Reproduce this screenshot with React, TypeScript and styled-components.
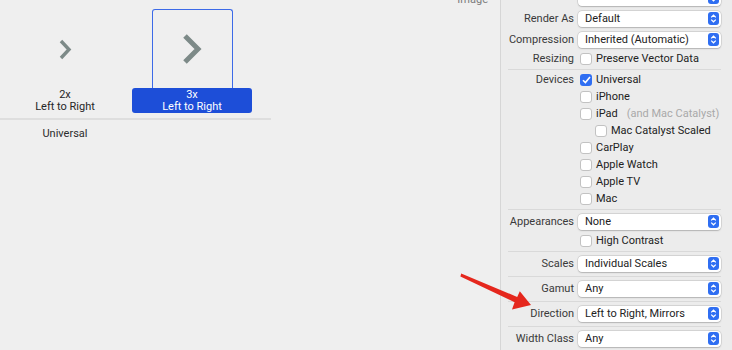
import React from "react";
import styled, { createGlobalStyle } from "styled-components";

const GlobalStyle = createGlobalStyle`
  html, body {
    margin: 0;
    padding: 0;
    background: #efefef;
  }
  body {
    font-family: Roboto, "Liberation Sans", sans-serif;
    font-size: 11px;
    color: #262626;
  }
`;

// Window

const Window = styled.div`
  position: relative;
  display: flex;
  width: 732px;
  height: 350px;
  overflow: hidden;
  background: #efefef;
`;

// Left side: the asset canvas with its slots

const Canvas = styled.div`
  flex: 1;
  display: flex;
  flex-direction: column;
`;

const CanvasHeader = styled.div`
  height: 0;
  overflow: visible;
  text-align: right;
  padding-right: 12px;
  color: #7d7d7d;
  line-height: 11px;
  transform: translateY(-6px);
`;

const SlotGroup = styled.div`
  width: 271px;
  display: flex;
  gap: 7px;
  padding: 9px 0 5px 5px;
  box-sizing: border-box;
  border-bottom: 2px solid #dedede;
`;

const Slot = styled.div`
  width: 120px;
  display: flex;
  flex-direction: column;
  align-items: center;
`;

const Well = styled.div<{ $selected?: boolean }>`
  width: 81px;
  height: 79px;
  box-sizing: border-box;
  display: flex;
  align-items: center;
  justify-content: center;
  border: 1px solid ${(p) => (p.$selected ? "#3c6ae8" : "transparent")};
  border-bottom: none;
  border-radius: 3px 3px 0 0;
`;

const Caption = styled.div<{ $selected?: boolean }>`
  width: 120px;
  height: 25px;
  box-sizing: border-box;
  padding-top: 1px;
  border-radius: 3px;
  text-align: center;
  line-height: 12px;
  background: ${(p) => (p.$selected ? "#1d4ed8" : "transparent")};
  color: ${(p) => (p.$selected ? "#ffffff" : "#262626")};
`;

const GroupFooter = styled.div`
  width: 120px;
  margin: 7px 0 0 5px;
  text-align: center;
  color: #2c2c2c;
`;

// Right side: inspector

const Inspector = styled.div`
  width: 231px;
  flex-shrink: 0;
  border-left: 1px solid #d6d6d6;
  background: #ececec;
  display: flex;
  flex-direction: column;
`;

const Section = styled.div<{ $first?: boolean }>`
  margin: ${(p) => (p.$first ? "-14px" : "0")} 11px 0 7px;
  padding: 1px 0 2px;
  border-bottom: 1px solid #d9d9d9;

  &:last-child {
    border-bottom: none;
  }
`;

const Row = styled.div<{ $kind: "popup" | "check" }>`
  display: grid;
  grid-template-columns: 66px 1fr;
  column-gap: 4px;
  align-items: center;
  height: ${(p) => (p.$kind === "popup" ? 21 : 17)}px;
`;

const Label = styled.div`
  text-align: right;
  color: #3a3a3a;
  white-space: nowrap;
`;

const Popup = styled.div`
  height: 16px;
  box-sizing: border-box;
  display: flex;
  align-items: center;
  justify-content: space-between;
  padding: 0 2px 0 7px;
  background: #ffffff;
  border-radius: 4px;
  box-shadow: 0 0 0 0.5px rgba(0, 0, 0, 0.14), 0 0.5px 1.5px rgba(0, 0, 0, 0.18);
  color: #222;
  white-space: nowrap;
`;

const Stepper = styled.span`
  width: 11px;
  height: 13px;
  border-radius: 3px;
  background: #2f6ef2;
  display: flex;
  align-items: center;
  justify-content: center;
`;

const CheckItem = styled.label<{ $indent?: number }>`
  display: flex;
  align-items: center;
  gap: 4px;
  padding-left: ${(p) => 2 + (p.$indent ?? 0)}px;
  white-space: nowrap;
  color: #222;
`;

const Box = styled.span<{ $checked?: boolean }>`
  width: 12px;
  height: 12px;
  box-sizing: border-box;
  border-radius: 3px;
  display: flex;
  align-items: center;
  justify-content: center;
  background: ${(p) => (p.$checked ? "#2f6ef2" : "#ffffff")};
  border: ${(p) => (p.$checked ? "none" : "1px solid #c2c2c2")};
`;

const Muted = styled.span`
  color: #a9a9a9;
  margin-left: 5px;
`;

const ArrowOverlay = styled.svg`
  position: absolute;
  left: 0;
  top: 0;
  pointer-events: none;
`;

// Drawings

const Chevron = ({ size }: { size: "small" | "large" }) =>
  size === "large" ? (
    <svg width="20" height="32" viewBox="0 0 20 32">
      <polyline points="3,3 16,16 3,29" fill="none" stroke="#7d8a88" strokeWidth="5" />
    </svg>
  ) : (
    <svg width="14" height="21" viewBox="0 0 14 21">
      <polyline points="3,2 11,10.5 3,19" fill="none" stroke="#7d8a88" strokeWidth="3.4" />
    </svg>
  );

const StepperIcon = () => (
  <Stepper>
    <svg width="7" height="9" viewBox="0 0 7 9">
      <polyline points="1.2,3.4 3.5,1.2 5.8,3.4" fill="none" stroke="#fff" strokeWidth="1.2" />
      <polyline points="1.2,5.6 3.5,7.8 5.8,5.6" fill="none" stroke="#fff" strokeWidth="1.2" />
    </svg>
  </Stepper>
);

const Check = ({ checked, indent, children }: { checked?: boolean; indent?: number; children: React.ReactNode }) => (
  <CheckItem $indent={indent}>
    <Box $checked={checked}>
      {checked && (
        <svg width="9" height="8" viewBox="0 0 9 8">
          <polyline points="1,4.2 3.4,6.6 8,1" fill="none" stroke="#fff" strokeWidth="1.6" />
        </svg>
      )}
    </Box>
    {children}
  </CheckItem>
);

const PopupRow = ({ label, value }: { label: string; value: string }) => (
  <Row $kind="popup">
    <Label>{label}</Label>
    <Popup>
      <span>{value}</span>
      <StepperIcon />
    </Popup>
  </Row>
);

const CheckRow = ({ label, ...rest }: { label?: string; checked?: boolean; indent?: number; children: React.ReactNode }) => (
  <Row $kind="check">
    <Label>{label}</Label>
    <Check {...rest} />
  </Row>
);

const App = () => {
  return (
    <Window>
      <GlobalStyle />
      <Canvas>
        <CanvasHeader>Image</CanvasHeader>
        <SlotGroup>
          <Slot>
            <Well>
              <Chevron size="small" />
            </Well>
            <Caption>
              2x
              <br />
              Left to Right
            </Caption>
          </Slot>
          <Slot>
            <Well $selected>
              <Chevron size="large" />
            </Well>
            <Caption $selected>
              3x
              <br />
              Left to Right
            </Caption>
          </Slot>
        </SlotGroup>
        <GroupFooter>Universal</GroupFooter>
      </Canvas>

      <Inspector>
        <Section $first>
          <PopupRow label="" value="" />
          <PopupRow label="Render As" value="Default" />
          <PopupRow label="Compression" value="Inherited (Automatic)" />
          <CheckRow label="Resizing">Preserve Vector Data</CheckRow>
        </Section>
        <Section>
          <CheckRow label="Devices" checked>
            Universal
          </CheckRow>
          <CheckRow>iPhone</CheckRow>
          <CheckRow>
            iPad<Muted>(and Mac Catalyst)</Muted>
          </CheckRow>
          <CheckRow indent={15}>Mac Catalyst Scaled</CheckRow>
          <CheckRow>CarPlay</CheckRow>
          <CheckRow>Apple Watch</CheckRow>
          <CheckRow>Apple TV</CheckRow>
          <CheckRow>Mac</CheckRow>
        </Section>
        <Section>
          <PopupRow label="Appearances" value="None" />
          <CheckRow>High Contrast</CheckRow>
        </Section>
        <Section>
          <PopupRow label="Scales" value="Individual Scales" />
        </Section>
        <Section>
          <PopupRow label="Gamut" value="Any" />
        </Section>
        <Section>
          <PopupRow label="Direction" value="Left to Right, Mirrors" />
        </Section>
        <Section>
          <PopupRow label="Width Class" value="Any" />
        </Section>
      </Inspector>

      <ArrowOverlay width="732" height="350" viewBox="0 0 732 350">
        <polygon
          points="461.2,273.4 460.4,276.6 514.6,302.2 512,309.5 531,305 519.8,291.2 517.2,297"
          fill="#e5271d"
        />
      </ArrowOverlay>
    </Window>
  );
};

export default App;
